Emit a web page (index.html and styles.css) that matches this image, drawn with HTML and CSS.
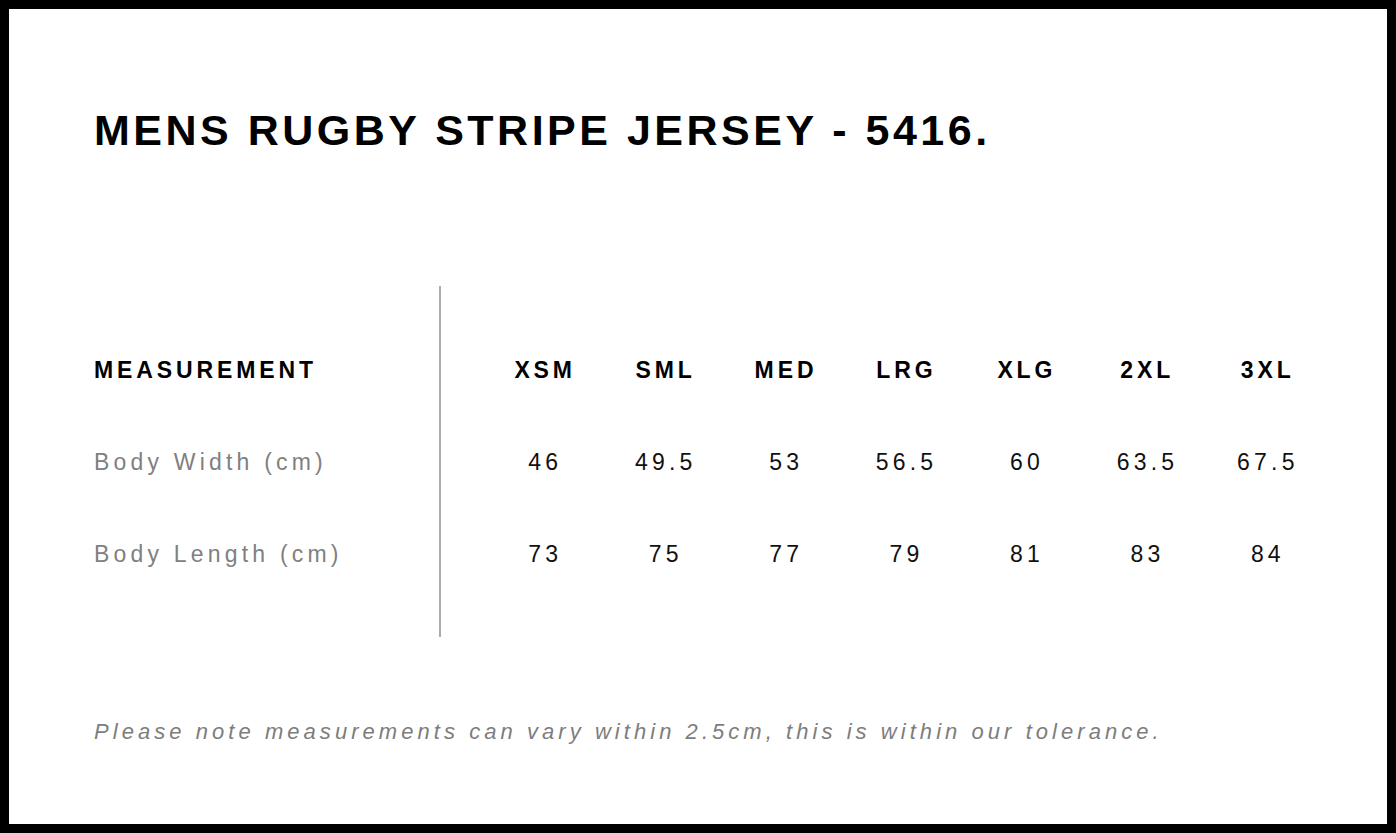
FILE: index.html
```html
<!DOCTYPE html>
<html lang="en">
<head>
<meta charset="utf-8">
<title>Mens Rugby Stripe Jersey - 5416 Size Chart</title>
<link rel="stylesheet" href="styles.css">
</head>
<body>
<main class="card">
  <h1 class="title">MENS RUGBY STRIPE JERSEY - 5416.</h1>
  <section class="chart">
    <div class="labels">
      <div class="row head">MEASUREMENT</div>
      <div class="row label">Body Width (cm)</div>
      <div class="row label">Body Length (cm)</div>
    </div>
    <div class="divider"></div>
    <div class="sizes">
      <div class="cell head">XSM</div>
      <div class="cell head">SML</div>
      <div class="cell head">MED</div>
      <div class="cell head">LRG</div>
      <div class="cell head">XLG</div>
      <div class="cell head">2XL</div>
      <div class="cell head">3XL</div>
      <div class="cell">46</div>
      <div class="cell">49.5</div>
      <div class="cell">53</div>
      <div class="cell">56.5</div>
      <div class="cell">60</div>
      <div class="cell">63.5</div>
      <div class="cell">67.5</div>
      <div class="cell">73</div>
      <div class="cell">75</div>
      <div class="cell">77</div>
      <div class="cell">79</div>
      <div class="cell">81</div>
      <div class="cell">83</div>
      <div class="cell">84</div>
    </div>
  </section>
  <p class="note">Please note measurements can vary within 2.5cm, this is within our tolerance.</p>
</main>
</body>
</html>
```
FILE: styles.css
```css
html, body {
  margin: 0;
  padding: 0;
}

body {
  background: #000;
  padding: 9px;
  box-sizing: border-box;
  height: 833px;
  font-family: "Liberation Sans", Arial, Helvetica, sans-serif;
}

.card {
  background: #fff;
  height: 815px;
  box-sizing: border-box;
  padding: 100px 0 0 85px;
}

.title {
  margin: 0;
  font-size: 43px;
  line-height: 1;
  font-weight: 700;
  letter-spacing: 3.5px;
  color: #000;
}

.chart {
  margin-top: 134px;
  height: 351px;
  display: flex;
  align-items: center;
}

.labels {
  width: 345px;
  display: flex;
  flex-direction: column;
}

.row {
  height: 92px;
  line-height: 92px;
  font-size: 23px;
  letter-spacing: 3.9px;
  white-space: nowrap;
}

.head {
  font-weight: 700;
  color: #000;
}

.label {
  color: #808080;
  letter-spacing: 4.2px;
}

.divider {
  width: 2px;
  align-self: stretch;
  background: #ababab;
}

.sizes {
  margin-left: 42px;
  width: 843px;
  display: grid;
  grid-template-columns: repeat(7, 1fr);
  grid-auto-rows: 92px;
}

.cell {
  line-height: 92px;
  font-size: 23px;
  letter-spacing: 4.2px;
  padding-left: 4.2px;
  text-align: center;
  color: #111;
}

.cell.head {
  color: #000;
  letter-spacing: 3.9px;
  padding-left: 3.9px;
}

.note {
  margin: 84px 0 0;
  font-size: 22px;
  line-height: 1;
  font-style: italic;
  letter-spacing: 4.05px;
  color: #7d7d7d;
}
```
